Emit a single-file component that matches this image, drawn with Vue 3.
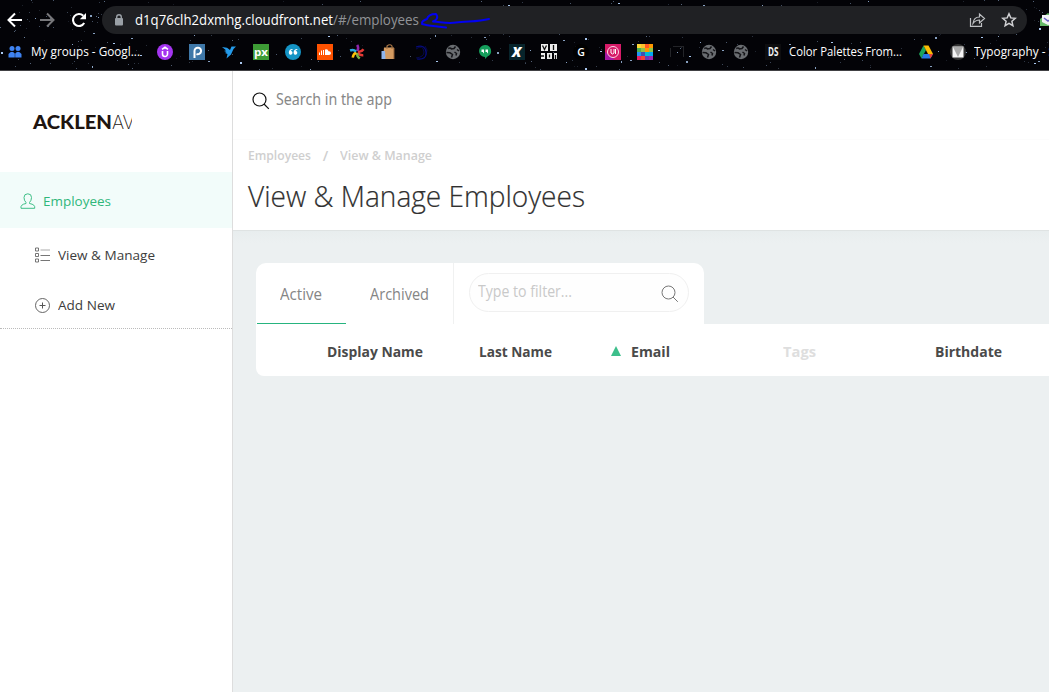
<script setup>
// Stretches a line of text horizontally to a given width in pixels.
const vFit = {
  mounted(el, { value }) {
    const natural = el.getBoundingClientRect().width
    el.style.width = value + 'px'
    el.style.transform = `scaleX(${value / natural})`
  }
}

const bright = [
  [1, 52], [72, 44], [93, 33], [113, 43], [92, 66], [131, 38], [140, 55], [35, 18], [90, 15], [162, 6], [194, 35], [208, 61], [240, 62], [98, 17],
  [258, 51], [328, 36], [435, 35], [484, 37], [508, 5], [310, 69], [497, 52], [436, 61], [530, 50], [563, 40], [585, 38], [566, 62], [632, 44],
  [600, 51], [621, 61], [630, 60], [658, 50], [677, 52], [686, 61], [689, 56], [700, 42], [722, 50], [585, 68], [762, 5], [703, 5], [618, 3],
  [815, 67], [789, 44], [831, 42], [868, 1], [935, 37], [981, 37], [998, 36], [1038, 61], [1039, 28], [938, 51], [965, 52], [1034, 63], [862, 52], [930, 66]
]
const stars = bright.map(([x, y], i) => ({ x, y, w: i % 3 === 1 ? 1 : 2, h: i % 4 ? 1 : 2, o: i % 3 ? 0.8 : 1 }))
let seed = 41
const rnd = () => (seed = (seed * 16807) % 2147483647) / 2147483647
for (let i = 0; i < 330; i++) {
  stars.push({ x: Math.floor(rnd() * 1049), y: Math.floor(rnd() * 70), w: 1, h: 1, o: 0.12 + rnd() * 0.4 })
}

const palette = ['#fdd835', '#fbc02d', '#ff5722', '#ff9800', '#4caf50', '#8bc34a', '#ff9800', '#8bc34a', '#2196f3', '#3f51b5', '#00bcd4', '#03a9f4', '#e91e63', '#f44336', '#673ab7', '#9c27b0']
const petals = [['#8e24aa', 10], ['#e53935', 75], ['#e53935', 125], ['#7cb342', 165], ['#ffc107', 225], ['#29a9e0', 290]]
const globe = 'M3.200 4.500Q5.500 3.500 6.500 5L9 4.500 10.500 2.500M1.500 8.500 5 8.800 7.500 10.500 6.500 13.500M9.500 8 11.500 9.500 11 11.500M12 5.500 14 7'
</script>

<template>
  <div class="page">
    <header class="chrome">
      <svg class="sky" width="1049" height="70">
        <rect v-for="(s, i) in stars" :key="i" :x="s.x" :y="s.y" :width="s.w" :height="s.h" :opacity="s.o" fill="#a9c8ef" />
      </svg>
      <div class="toolbar">
        <div class="nav">
          <svg width="16" height="16" viewBox="0 0 16 16" fill="none" stroke="#fff" stroke-width="2"><path d="M15 8H2M8 1.5 1.5 8 8 14.5" /></svg>
          <svg width="16" height="16" viewBox="0 0 16 16" fill="none" stroke="#77777a" stroke-width="2"><path d="M1 8h13M8 1.5 14.5 8 8 14.5" /></svg>
          <svg width="16" height="16" viewBox="0 0 16 16"><path d="M13.2 11A6 6 0 1 1 12.3 3.8" fill="none" stroke="#fff" stroke-width="2.1" /><path d="M15 1v6.2H8.8z" fill="#fff" /></svg>
        </div>
        <div class="omnibox">
          <svg class="lock" width="10" height="12" viewBox="0 0 10 12"><rect x="1" y="4" width="8" height="7.5" rx="1" fill="#9aa0a6" /><path d="M2.7 5V3a2.3 2.3 0 0 1 4.6 0v2" fill="none" stroke="#9aa0a6" stroke-width="1.4" /></svg>
          <span v-fit="198" class="txt host">d1q76clh2dxmhg.cloudfront.net</span><span v-fit="86" class="txt path">/#/employees</span>
          <svg class="scribble" width="72" height="18" viewBox="0 0 72 18" fill="none" stroke="#0202f0" stroke-width="2" stroke-linecap="round" stroke-linejoin="round"><path d="M69 8C58 11 47 10 36 11.500C28 13 21 11 13 10.500C16 9 19 7 16 3C12 3 8 4 7 8C4 9 1 11 2 13C8 15 17 15 26 16.500" /></svg>
          <span class="grow"></span>
          <svg width="17" height="16" viewBox="0 0 17 16" fill="none" stroke="#bfc1c4" stroke-width="1.2"><path d="M1.500 6v8.300h11V11M4 11.500C4.500 7 7 5 10.500 5V2l5 4.500-5 4.500V8C8 8 6 8.800 4 11.500z" /></svg>
          <svg class="star" width="16" height="16" viewBox="0 0 16 16" fill="none" stroke="#d0d1d4" stroke-width="1.5"><path d="m8 1.800 1.800 4.100 4.500.4-3.400 3 1 4.400L8 11.400l-3.900 2.300 1-4.400-3.400-3 4.500-.4z" /></svg>
        </div>
        <svg class="ext" width="16" height="16" viewBox="0 0 16 16"><path d="M0 7 8 1l8 6v7H0z" fill="#65b968" /><path d="M2 3h14v7l-8 3-6-3z" fill="#f1f1f5" /><path d="m4 6 4 3 5-3" fill="none" stroke="#685dc4" stroke-width="1.500" /></svg>
      </div>

      <div class="bookmarks">
        <div class="mark">
          <svg width="16" height="16" viewBox="0 0 16 16" fill="#3f83f2"><circle cx="5" cy="4.600" r="2.500" /><circle cx="11" cy="4.600" r="2.500" /><path d="M1.500 13.500V10Q5 6 7.800 9.500V13.500zM8.200 13.500V9.500Q11 6 14.500 10V13.500z" /></svg>
          <span v-fit="109" class="txt">My groups - Googl...</span>
        </div>
        <svg class="after" width="16" height="16" viewBox="0 0 16 16"><circle cx="8" cy="8" r="8" fill="#a435f0" /><path d="M5.500 7v3a2.500 2.500 0 0 0 5 0V7M5 5.300l3-2 3 2" fill="none" stroke="#fff" stroke-width="1.600" /></svg>
        <svg width="16" height="16" viewBox="0 0 16 16"><rect width="16" height="16" fill="#3f78a8" /><path d="M5.500 14V7A3.300 3.300 0 1 1 7.500 10" fill="none" stroke="#fff" stroke-width="2" /></svg>
        <svg width="16" height="16" viewBox="0 0 16 16" fill="#249bea"><path d="m1 3 5 .8L9 6l1.500-3.500H15L12.500 5 10 10.500l-4.500 4 1-4.500L4 9l1.500-1L3 7l2-.8z" /></svg>
        <svg width="16" height="16" viewBox="0 0 16 16"><rect width="16" height="16" fill="#3d9b35" /><text x="1" y="11.500" font-family="Open Sans, sans-serif" font-size="11" font-weight="700" textLength="14" lengthAdjust="spacingAndGlyphs" fill="#fff">px</text></svg>
        <svg width="16" height="16" viewBox="0 0 16 16"><circle cx="8" cy="8" r="8" fill="#1594c5" /><path d="M7.500 5C5 5 3.800 6.600 3.800 8.500c0 3 3.700 3 3.700.3 0-1.200-.8-1.700-1.700-1.700C6 6.300 6.500 6 7.500 6zM12.300 5c-2.500 0-3.700 1.600-3.700 3.500 0 3 3.700 3 3.700.3 0-1.200-.8-1.700-1.700-1.700.2-.8.7-1.100 1.700-1.100z" fill="#fff" /></svg>
        <svg width="16" height="16" viewBox="0 0 16 16"><rect width="16" height="16" fill="#ff5200" /><path d="M2.500 8.500V11M4.500 6.500V11M6.500 6V11" stroke="#fff" /><path d="M8 5.500Q11 4.500 11.500 7.300Q14 7 14 9.200Q14 11 12 11H8z" fill="#fff" /></svg>
        <svg width="16" height="16" viewBox="0 0 16 16" fill="none" stroke-width="2.500"><path v-for="p in petals" :key="p[1]" d="M8 7Q9.500 4 7 1" :stroke="p[0]" :transform="`rotate(${p[1]} 8 8)`" /></svg>
        <svg width="16" height="16" viewBox="0 0 16 16"><path d="M3 3.500h10V15H2z" fill="#d49b61" /><path d="M6 5V2Q9-.5 11 2v3" fill="none" stroke="#aa7748" stroke-width="1.200" /><path d="M.5 7h3.500l.5 8H.5z" fill="#8fb5ec" /><path d="M13 4v11" stroke="#8b5b35" /></svg>
        <svg width="16" height="16" viewBox="0 0 16 16" fill="none" stroke="#070b7c"><path d="M3 3q9-3 10 5t-9 7" stroke-width="1.200" /><path d="M3 5q7-5 8 3 0 5-8 6M12 2l2 4-1 5" stroke-width=".6" /></svg>
        <svg width="16" height="16" viewBox="0 0 16 16"><circle cx="8" cy="8" r="7.200" fill="#6a6d71" /><path :d="globe" fill="none" stroke="#141418" stroke-width="1.500" /></svg>
        <svg width="16" height="16" viewBox="0 0 16 16"><path d="M8 1a6 6 0 0 1 2.500 11.500L8 15v-2A6 6 0 0 1 8 1z" fill="#159e5b" /><path d="M4.500 5.500H7v3L6 9.500V8H4.500zM8.500 5.500H11v3l-1 1V8H8.500z" fill="#fff" /></svg>
        <svg width="16" height="16" viewBox="0 0 16 16"><rect width="16" height="16" fill="#07242b" /><text x="3" y="13" font-family="Open Sans, sans-serif" font-size="14" font-weight="800" font-style="italic" fill="#fff">X</text></svg>
        <svg width="16" height="16" viewBox="0 0 16 16"><path d="M0 0h7v7H0zM9 0h7v7H9zM0 9h4v6H0zM6 9h5v6H6zM13 9h3v6h-3z" fill="#eee" /><path d="m1.500 1.500 2 4 2-4M12.500 1v5M0 12h3M8.500 10.500v3M14.500 11v4" fill="none" stroke="#111" stroke-width="1.300" /></svg>
        <svg width="16" height="16" viewBox="0 0 16 16"><circle cx="8" cy="8" r="8" fill="#000" /><text x="4.300" y="12" font-family="Open Sans, sans-serif" font-size="10.500" font-weight="600" fill="#fff">G</text></svg>
        <svg width="16" height="16" viewBox="0 0 16 16"><rect width="16" height="16" fill="#d71b68" /><path d="M0 8v8h10z" fill="#a719a5" /><circle cx="8" cy="8" r="5.500" fill="none" stroke="#ffd6e8" /><path d="M6 5v4q1.500 2 3 0V5M10.500 5v5" fill="none" stroke="#fff" /></svg>
        <svg width="16" height="16" viewBox="0 0 16 16"><rect v-for="(c, i) in palette" :key="i" :x="(i % 4) * 4" :y="Math.floor(i / 4) * 4" width="4" height="4" :fill="c" /></svg>
        <svg width="16" height="16" viewBox="0 0 16 16"><path d="M1.500 4v9M14.500 2v11M4 2.500h10" fill="none" stroke="#232428" /></svg>
        <svg v-for="n in 2" :key="n" width="16" height="16" viewBox="0 0 16 16"><circle cx="8" cy="8" r="7.200" fill="#6a6d71" /><path :d="globe" fill="none" stroke="#141418" stroke-width="1.500" /></svg>
        <div class="mark">
          <svg width="16" height="16" viewBox="0 0 16 16"><rect width="16" height="16" fill="#0d0d0f" /><text x="3" y="12" font-family="Open Sans, sans-serif" font-size="11.500" font-weight="700" textLength="10.500" lengthAdjust="spacingAndGlyphs" fill="#eee">DS</text></svg>
          <span v-fit="113" class="txt">Color Palettes From...</span>
        </div>
        <svg width="16" height="16" viewBox="0 0 16 16"><path d="M5.500 1.500 1 10l2.500 4.500L8 6z" fill="#1ba35b" /><path d="M5.500 1.500h5L15 10h-5z" fill="#fbbc04" /><path d="m3.500 14.500 2-4.500H15l-2.500 4.500z" fill="#2879e8" /><path d="M15 10h-4l1.500 4.500z" fill="#ea4335" /></svg>
        <div class="mark">
          <svg width="16" height="16" viewBox="0 0 16 16"><circle cx="8" cy="8" r="8" fill="#333" /><path d="M2.500 2.500h11v11h-11z" fill="#f5f5f5" /><path d="m3 3 5 10 5-10z" fill="#aaa" /></svg>
          <span v-fit="81" class="txt">Typography - S</span>
        </div>
      </div>
    </header>

    <div class="app">
      <aside class="sidebar">
        <div class="logo"><span v-fit="79" class="txt bold">ACKLEN</span><span class="thin">AV</span></div>
        <nav>
          <a class="item current">
            <svg width="16" height="16" viewBox="0 0 16 16" fill="none" stroke="#3fbf87"><path d="M1 15.300q-.8-3.800 5-4.800v-1Q4 7.500 4 4.500 4 .8 7.800.8t3.700 3.700q0 3-2 5v1q6 1 5.200 4.800z" /></svg>
            <span v-fit="68" class="txt">Employees</span>
          </a>
          <a class="item sub">
            <svg width="16" height="16" viewBox="0 0 16 16" fill="none" stroke="#666"><path d="M1.500 1h3v3h-3zM1.500 6.500h3v3h-3zM1.500 12h3v3h-3zM6.500 8.500h9.500M6.500 13.500h9.500" stroke-width=".9" /><path d="M6.500 3h9.500" stroke="#aaa" /></svg>
            <span v-fit="97" class="txt">View &amp; Manage</span>
          </a>
          <a class="item sub">
            <svg width="16" height="16" viewBox="0 0 16 16" fill="none" stroke="#555"><circle cx="8.500" cy="8.500" r="7" stroke-width=".9" /><path d="M8.500 5.500v6M5.500 8.500h6" /></svg>
            <span v-fit="57" class="txt">Add New</span>
          </a>
        </nav>
      </aside>

      <main>
        <div class="search">
          <svg width="18" height="18" viewBox="0 0 18 18" fill="none" stroke="#111" stroke-width="1.200"><circle cx="7.500" cy="7.500" r="6.500" /><path d="m12 12 4.800 4.800" /></svg>
          <span v-fit="116" class="txt">Search in the app</span>
        </div>
        <section class="title">
          <div class="crumbs">
            <span v-fit="63" class="txt">Employees</span><span class="slash">/</span><span v-fit="92" class="txt">View &amp; Manage</span>
          </div>
          <h1><span v-fit="337" class="txt">View &amp; Manage Employees</span></h1>
        </section>
        <section class="content">
          <div class="filters">
            <div class="tabs">
              <div class="tab on"><span v-fit="42" class="txt">Active</span></div>
              <div class="tab"><span v-fit="59" class="txt">Archived</span></div>
            </div>
            <div class="filter">
              <div class="pill">
                <span v-fit="94" class="txt">Type to filter...</span>
                <svg width="18" height="18" viewBox="0 0 18 18" fill="none" stroke="#777"><circle cx="7.500" cy="7.500" r="6.500" /><path d="m12 12 4.800 4.800" /></svg>
              </div>
            </div>
          </div>
          <div class="table">
            <div class="col"><span v-fit="96" class="txt">Display Name</span></div>
            <div class="col"><span v-fit="73" class="txt">Last Name</span></div>
            <div class="col email"><i class="sort"></i><span v-fit="39" class="txt">Email</span></div>
            <div class="col muted"><span v-fit="33" class="txt">Tags</span></div>
            <div class="col"><span v-fit="67" class="txt">Birthdate</span></div>
          </div>
        </section>
      </main>
    </div>
  </div>
</template>

<style>
body { margin: 0; background: #fff; overflow: hidden; }
</style>

<style scoped>
* { box-sizing: border-box; }
.page { width: 1049px; height: 692px; overflow: hidden; display: flex; flex-direction: column; font-family: "Open Sans", "Noto Sans", sans-serif; background: #fff; }
svg { display: block; flex: none; }
.txt { display: inline-block; flex: none; white-space: nowrap; transform-origin: 0 50%; }

.chrome { position: relative; height: 71px; flex: none; background: #030307; border-bottom: 1px solid #414144; overflow: hidden; }
.sky { position: absolute; inset: 0; }
.toolbar { position: relative; height: 40px; display: flex; align-items: center; padding-left: 7px; }
.nav { display: flex; gap: 16px; width: 95px; flex: none; }
.omnibox { width: 925px; height: 28px; flex: none; border-radius: 14px; background: #202124; display: flex; align-items: center; padding: 0 10px 0 12px; font-size: 14px; line-height: 20px; }
.lock { margin-right: 11px; }
.host { color: #fff; }
.path { color: #919397; }
.scribble { margin-left: 1px; }
.grow { flex: 1; }
.star { margin-left: 15px; }
.ext { margin-left: 13px; }
.bookmarks { position: relative; display: flex; align-items: center; gap: 16px; height: 24px; padding-left: 7px; color: #fff; font-size: 12px; line-height: 20px; }
.mark { display: flex; align-items: center; gap: 8px; flex: none; }
.after { margin-left: 1px; }

.app { flex: 1; display: flex; min-height: 0; }
.sidebar { width: 233px; flex: none; border-right: 1px solid #ddd; background: #fff; }
.logo { height: 101px; width: 132px; padding-left: 33px; display: flex; align-items: center; overflow: hidden; color: #1e1511; font-family: Lato, sans-serif; font-size: 19px; line-height: 22px; white-space: nowrap; }
.bold { font-weight: 900; }
.thin { font-weight: 200; font-family: Inter, sans-serif; font-size: 18.500px; letter-spacing: -.5px; }
nav { border-bottom: 1px dotted #bbb; height: 157px; }
.item { display: flex; align-items: center; font-size: 13.500px; line-height: 20px; color: #3d3d3d; }
.current { height: 56px; padding: 2px 0 0 20px; gap: 7px; background: #f2fcfa; color: #30b77b; }
.sub { height: 50px; padding: 3px 0 0 34px; gap: 8px; }

main { flex: 1; min-width: 0; display: flex; flex-direction: column; }
.search { height: 68px; display: flex; padding: 19px 0 0 19px; gap: 6px; font-size: 15.500px; line-height: 18px; color: #888; font-family: "Noto Sans", sans-serif; }
.search svg { margin-top: 2px; }
.title { height: 92px; flex: none; padding: 6px 0 0 15px; border-top: 1px solid #fcfcfc; border-bottom: 1px solid #dfe3e3; }
.crumbs { display: flex; height: 20px; font-size: 12.500px; line-height: 20px; font-weight: 600; color: #cfcfcf; }
.slash { width: 29px; text-align: center; font-size: 14px; }
h1 { margin: 10px 0 0; font-size: 28.500px; line-height: 40px; font-weight: 300; color: #303030; -webkit-text-stroke: .2px #303030; }
.content { flex: 1; padding: 32px 0 0 23px; background: linear-gradient(#e8edee, #ecf0f1 12px); }
.filters { display: flex; width: 448px; height: 61px; background: #fff; border-radius: 10px 10px 0 0; font-size: 15.500px; }
.tabs { width: 198px; padding: 1px 0 0 1px; display: flex; border-right: 1px solid #f0f1f1; }
.tab { height: 60px; width: 107px; display: flex; justify-content: center; align-items: center; color: #858585; padding-bottom: 1px; }
.tab.on { width: 89px; border-bottom: 1px solid #26b47f; padding: 1px 1px 0 0; }
.filter { padding: 10px 0 0 15px; }
.pill { width: 220px; height: 39px; border: 1px solid #f0f0f0; border-radius: 20px; display: flex; align-items: center; justify-content: space-between; padding: 0 9px 0 8px; color: #c9c9c9; background: #fefefe; }
.pill .txt { margin-top: -3px; }
.pill svg { margin-top: 3px; }
.table { height: 52px; width: 860px; display: flex; align-items: center; padding: 1px 0 0 71px; background: #fff; border-radius: 0 0 0 8px; font-size: 15px; line-height: 20px; font-weight: 700; color: #4a4a4a; }
.col { width: 152px; flex: none; display: flex; align-items: center; }
.email { width: 172px; gap: 10px; margin-left: -20px; }
.sort { border: 5px solid transparent; border-top: 0; border-bottom: 10px solid #3dbf8b; }
.muted { color: #dedede; }
</style>
